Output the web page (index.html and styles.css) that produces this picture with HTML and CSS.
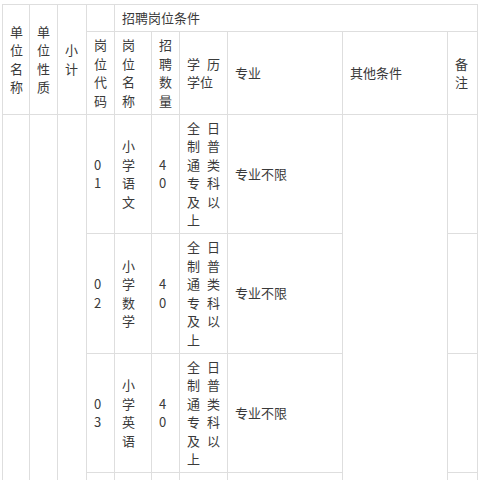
FILE: index.html
```html
<!DOCTYPE html>
<html lang="zh-CN">
<head>
<meta charset="utf-8">
<title>招聘岗位条件</title>
<link rel="stylesheet" href="styles.css">
</head>
<body>
<div class="page">
<table class="jobs">
  <colgroup>
    <col class="c1"><col class="c2"><col class="c3"><col class="c4"><col class="c5">
    <col class="c6"><col class="c7"><col class="c8"><col class="c9"><col class="c10">
  </colgroup>
  <tbody>
    <tr class="r-top">
      <td rowspan="2">单位名称</td>
      <td rowspan="2">单位性质</td>
      <td rowspan="2">小计</td>
      <td></td>
      <td colspan="6">招聘岗位条件</td>
    </tr>
    <tr class="r-head">
      <td>岗位代码</td>
      <td>岗位名称</td>
      <td>招聘数量</td>
      <td>学历学位</td>
      <td>专业</td>
      <td>其他条件</td>
      <td>备注</td>
    </tr>
    <tr class="r-data">
      <td rowspan="4"></td>
      <td rowspan="4"></td>
      <td rowspan="4"></td>
      <td>01</td>
      <td>小学语文</td>
      <td>40</td>
      <td>全日制普通类专科及以上</td>
      <td>专业不限</td>
      <td rowspan="4"></td>
      <td></td>
    </tr>
    <tr class="r-data">
      <td>02</td>
      <td>小学数学</td>
      <td>40</td>
      <td>全日制普通类专科及以上</td>
      <td>专业不限</td>
      <td></td>
    </tr>
    <tr class="r-data">
      <td>03</td>
      <td>小学英语</td>
      <td>40</td>
      <td>全日制普通类专科及以上</td>
      <td>专业不限</td>
      <td></td>
    </tr>
    <tr class="r-data">
      <td></td>
      <td></td>
      <td></td>
      <td class="top">全日</td>
      <td></td>
      <td></td>
    </tr>
  </tbody>
</table>
</div>
</body>
</html>
```

FILE: styles.css
```css
html, body {
  margin: 0;
  padding: 0;
  background: #ffffff;
  overflow: hidden;
}

.page {
  padding: 4px 0 0 2px;
  font-family: "Noto Sans CJK SC", "Noto Sans", sans-serif;
  font-size: 13px;
  line-height: 18.4px;
  color: #3a3a3a;
}

.jobs {
  border-collapse: collapse;
  table-layout: fixed;
  width: 475px;
}

.jobs td {
  border: 1px solid #dedede;
  padding: 4px 7px;
  vertical-align: middle;
  text-align: justify;
  word-break: break-all;
}

.jobs td.top {
  vertical-align: top;
  text-align-last: justify;
}

.c1 { width: 27px; }
.c2 { width: 28px; }
.c3 { width: 29px; }
.c4 { width: 28px; }
.c5 { width: 37px; }
.c6 { width: 28px; }
.c7 { width: 48px; }
.c8 { width: 115px; }
.c9 { width: 105px; }
.c10 { width: 30px; }

.r-top { height: 27px; }
.r-head { height: 82px; }
.r-data { height: 119px; }
```
